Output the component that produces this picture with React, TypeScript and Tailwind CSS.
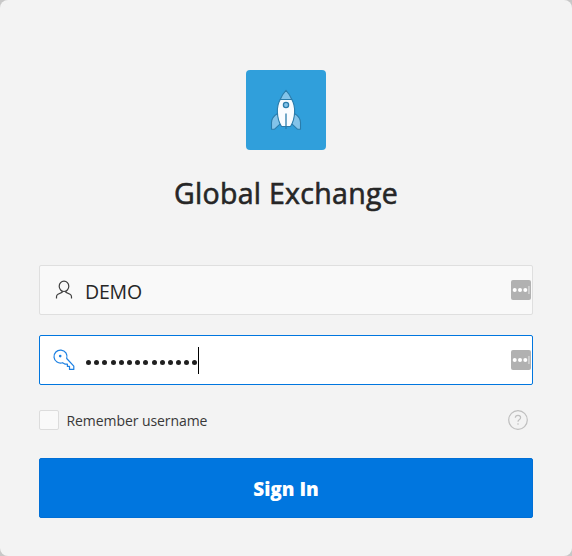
import React from "react";

function Rocket() {
  return (
    <svg width="32" height="42" viewBox="0 0 32 42" fill="none" stroke="#2a7cab" strokeWidth="1.1" strokeLinejoin="round">
      <path d="M7.6 24.5C3.5 27 1.5 30 1.5 33.5V40.2H4.6L11 34.2Z" fill="#83c3e9" />
      <path d="M24.4 24.5C28.5 27 30.5 30 30.5 33.5V40.2H27.4L21 34.2Z" fill="#83c3e9" />
      <path d="M10.2 10.5C6.3 17 6.2 29 11.5 37.5H20.5C25.8 29 25.7 17 21.8 10.5Z" fill="#f8fcff" />
      <path d="M16 1.3C13.6 3.8 11.5 7 10.2 10.5H21.8C20.5 7 18.4 3.8 16 1.3Z" fill="#83c3e9" />
      <circle cx="16" cy="16" r="2.6" fill="#83c3e9" strokeWidth="1.3" />
      <path d="M16 24.5V40" strokeWidth="1.3" />
    </svg>
  );
}

function UserIcon() {
  return (
    <svg width="18" height="20" viewBox="0 0 18 20" fill="none" stroke="#404040" strokeWidth="1.2">
      <ellipse cx="9" cy="6.3" rx="4.8" ry="5.2" />
      <path d="M7.1 11V12.3L3 14.3Q1.5 15.1 1.5 16.8V18.6M10.9 11V12.3L15 14.3Q16.5 15.1 16.5 16.8V18.6" />
    </svg>
  );
}

function KeyIcon() {
  return (
    <svg width="22" height="22" viewBox="0 0 22 22" fill="none" stroke="#1c80e3" strokeWidth="1.2" strokeLinejoin="round">
      <path d="M13.7 9.5A6.5 6.5 0 1 0 9.6 13.7L12.2 15.2H14.4V17.4H16.5V20.4H20.8V17.2Z" />
      <circle cx="7.2" cy="7.1" r="1.3" fill="#1c80e3" stroke="none" />
    </svg>
  );
}

function ManagerBadge() {
  return (
    <svg width="20" height="20" viewBox="0 0 20 20" className="shrink-0">
      <rect width="20" height="20" rx="2" fill="#b1b1b1" />
      <g fill="#fff">
        <circle cx="3.7" cy="10" r="2" />
        <circle cx="9" cy="10" r="2" />
        <circle cx="14.3" cy="10" r="2" />
        <rect x="17.4" y="6" width="1.1" height="8" opacity=".65" />
      </g>
    </svg>
  );
}

export default function App() {
  return (
    <div className="h-[556px] w-[572px] bg-[#c8c8c8] font-['Open_Sans','Noto_Sans',sans-serif] text-[#262626]">
      <main className="flex h-full flex-col items-center rounded-lg bg-[#f3f3f3] px-[39px] pt-[70px]">
        <div className="flex h-20 w-20 shrink-0 items-center justify-center rounded bg-[#309fdb]">
          <Rocket />
        </div>
        <h1 className="mt-[23px] h-10 text-[28.5px] leading-10 font-normal tracking-[0.3px] whitespace-nowrap [-webkit-text-stroke:0.6px_#262626]">Global Exchange</h1>
        <form className="mt-[52px] w-full" onSubmit={(e) => e.preventDefault()}>
          <div className="flex h-[50px] items-center rounded-xs border border-[#dfdfdf] bg-[#f9f9f9] pr-px pl-[15px]">
            <UserIcon />
            <span className="mt-[3px] ml-[12px] flex-1 text-[19.5px] tracking-[-0.2px]">DEMO</span>
            <ManagerBadge />
          </div>
          <div className="mt-5 flex h-[50px] items-center rounded-xs border border-[#0076df] bg-white pr-px pl-[13px]">
            <KeyIcon />
            <span className="mt-[5px] ml-[11px] flex items-center gap-[3.2px]" aria-label="Password">
              {Array.from({ length: 14 }, (_, i) => (
                <i key={i} className="block h-[5px] w-[5px] rounded-full bg-[#202020]" />
              ))}
            </span>
            <span className="ml-[0.4px] h-[27px] w-px bg-black" />
            <span className="flex-1" />
            <ManagerBadge />
          </div>
          <div className="mt-[25px] flex h-5 items-center">
            <span className="h-5 w-5 rounded-xs border border-[#dcdcdc] bg-[#f9f9f9]" />
            <span className="mt-px ml-[7.5px] flex-1 text-sm tracking-[-0.07px] whitespace-nowrap text-[#383838]">Remember username</span>
            <svg width="20" height="20" viewBox="0 0 20 20" fill="none" stroke="#bfbfbf" className="mr-[4.6px]">
              <circle cx="10" cy="10" r="9.3" strokeWidth="1.2" />
              <path d="M7.3 7.7Q7.4 5.3 10 5.3Q12.6 5.3 12.6 7.5Q12.6 8.9 11.2 9.7Q10 10.4 10 11.8" strokeWidth="1.2" />
              <circle cx="10" cy="14" r=".8" fill="#bfbfbf" stroke="none" />
            </svg>
          </div>
          <button className="mt-7 flex h-[60px] w-full items-center justify-center rounded-xs border border-[#006fd6] bg-[#0076df] pt-[2px] text-[19px] font-extrabold tracking-[-0.05px] text-white">
            Sign In
          </button>
        </form>
      </main>
    </div>
  );
}
